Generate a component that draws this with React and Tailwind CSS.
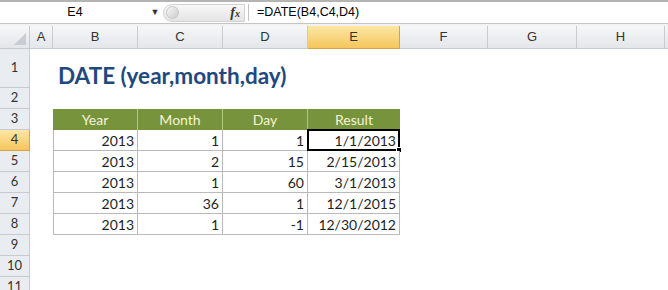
import React from "react";

const cols = ["A", "B", "C", "D", "E", "F", "G", "H"];

const rows = [
  { year: "2013", month: "1", day: "1", result: "1/1/2013" },
  { year: "2013", month: "2", day: "15", result: "2/15/2013" },
  { year: "2013", month: "1", day: "60", result: "3/1/2013" },
  { year: "2013", month: "36", day: "1", result: "12/1/2015" },
  { year: "2013", month: "1", day: "-1", result: "12/30/2012" },
];

const gridCols = "grid grid-cols-[30px_23px_85px_85px_85px_92px_88px_89px_88px_1fr]";

// en-tête de ligne (numéros à gauche)
const RowHead = ({ n, active, tall }) => (
  <div
    className={`flex items-center justify-center border-r border-b text-[13px] text-[#333] ${
      tall ? "h-[39px]" : "h-[21px]"
    } ${
      active
        ? "bg-gradient-to-b from-[#fce7a4] to-[#f5c65a] border-[#d2a545]"
        : "bg-[#e9ecf0] border-[#c6cbd2]"
    }`}
  >
    {n}
  </div>
);

const Empty = ({ count }) =>
  Array.from({ length: count }).map((_, i) => <div key={i} className="h-[21px]" />);

const cell = "h-[21px] flex items-center justify-end pr-[3px] border-r border-b border-[#b9b9b9] bg-white";

export default function App() {
  return (
    <div className="w-[668px] h-[290px] overflow-hidden bg-white font-['Lato',sans-serif] text-[#1e1e1e]">
      {/* Barre de formule */}
      <div className="h-[24px] flex items-stretch border-t-2 border-[#b4b4b4] border-b border-b-[#c4c4c4] bg-white font-['Liberation_Sans',sans-serif] text-[12.5px] text-black">
        <div className="w-[148px] flex items-center justify-center pl-[2px]">E4</div>
        <div className="w-[14px] flex items-center justify-center text-[9px] text-[#333]">▼</div>
        <div className="flex items-center pl-[1px]">
          <div className="relative w-[82px] h-[18px] rounded-l-full border border-[#d2d2d2] bg-gradient-to-b from-[#f8f8f8] to-[#e4e4e4] flex items-center">
            <div className="ml-[2px] w-[13px] h-[13px] rounded-full bg-gradient-to-br from-[#f6f6f6] to-[#cdcdcd] border border-[#c8c8c8]" />
            <span className="ml-auto mr-[4px] font-['Liberation_Serif',serif] italic font-bold text-[14px] text-[#333] leading-none">
              f<span className="text-[10px]">x</span>
            </span>
          </div>
        </div>
        <div className="w-[1px] bg-[#c4c4c4] ml-[3px] my-[2px]" />
        <div className="flex items-center pl-[8px]">=DATE(B4,C4,D4)</div>
      </div>

      <div className="h-[2px] bg-[#f2f2f2]" />

      {/* En-têtes de colonnes */}
      <div className={`${gridCols} h-[23px] font-['Liberation_Sans',sans-serif] text-[13px] text-[#333]`}>
        <div className="relative bg-gradient-to-b from-[#f6f7f8] to-[#e3e6ea] border-r border-b border-[#c6cbd2]">
          <div className="absolute right-[3px] bottom-[3px] w-0 h-0 border-l-[12px] border-l-transparent border-b-[12px] border-b-[#c9ccd0]" />
        </div>
        {cols.map((c) => (
          <div
            key={c}
            className={`flex items-center justify-center border-r border-b ${
              c === "E"
                ? "bg-gradient-to-b from-[#fce7a4] to-[#f5c65a] border-[#d2a545]"
                : "bg-gradient-to-b from-[#f6f7f8] to-[#e3e6ea] border-[#c6cbd2]"
            }`}
          >
            {c}
          </div>
        ))}
        <div className="bg-gradient-to-b from-[#f6f7f8] to-[#e3e6ea] border-b border-[#c6cbd2]" />
      </div>

      {/* Feuille */}
      <div className={`${gridCols} text-[14px]`}>
        {/* Ligne 1 : titre */}
        <RowHead n={1} tall />
        <div className="h-[39px]" />
        <div className="col-span-8 h-[39px] flex items-end pl-[5px] pb-[1px] whitespace-nowrap font-bold text-[22.5px] text-[#1f497d] leading-none">
          DATE (year,month,day)
        </div>

        {/* Ligne 2 */}
        <RowHead n={2} />
        <Empty count={9} />

        {/* Ligne 3 : en-tête du tableau */}
        <RowHead n={3} />
        <div className="h-[21px]" />
        {["Year", "Month", "Day", "Result"].map((h, i) => (
          <div
            key={h}
            className={`h-[21px] flex items-center justify-center bg-[#77933c] text-[#f5f4d6] ${
              i < 3 ? "border-r border-[#b4c58c]" : ""
            }`}
          >
            {h}
          </div>
        ))}
        <Empty count={4} />

        {/* Lignes 4 à 8 : données */}
        {rows.map((r, i) => (
          <React.Fragment key={i}>
            <RowHead n={i + 4} active={i === 0} />
            <div className="h-[21px]" />
            <div className={`${cell} border-l`}>{r.year}</div>
            <div className={cell}>{r.month}</div>
            <div className={cell}>{r.day}</div>
            <div className={`${cell} relative`}>
              {r.result}
              {i === 0 && (
                <div className="absolute -left-[1px] -top-[1px] -right-[1px] -bottom-[1px] border-2 border-black">
                  <div className="absolute -right-[4px] -bottom-[4px] w-[6px] h-[6px] bg-black border border-white" />
                </div>
              )}
            </div>
            <Empty count={4} />
          </React.Fragment>
        ))}

        {/* Lignes 9 à 11 */}
        {[9, 10, 11].map((n) => (
          <React.Fragment key={n}>
            <RowHead n={n} />
            <Empty count={9} />
          </React.Fragment>
        ))}
      </div>
    </div>
  );
}
